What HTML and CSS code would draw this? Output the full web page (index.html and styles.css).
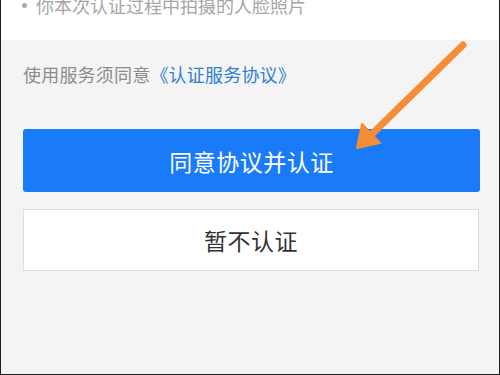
FILE: index.html
```html
<!DOCTYPE html>
<html lang="zh">
<head>
<meta charset="utf-8">
<link rel="stylesheet" href="styles.css">
</head>
<body>
<div class="frame">
  <div class="top">
    <div class="item"><span class="dot"></span><span>你本次认证过程中拍摄的人脸照片</span></div>
  </div>
  <div class="bottom">
    <p class="agree">使用服务须同意<span class="link">《认证服务协议》</span></p>
    <div class="btn primary">同意协议并认证</div>
    <div class="btn secondary">暂不认证</div>
  </div>
  <svg class="arrow" width="500" height="375" viewBox="0 0 500 375">
    <line x1="463" y1="45" x2="372" y2="134" stroke="#f68d36" stroke-width="7" stroke-linecap="round"/>
    <polygon points="362,124 357,148 380,143" fill="#f68d36" stroke="#f68d36" stroke-width="2" stroke-linejoin="round"/>
  </svg>
</div>
</body>
</html>
```
FILE: styles.css
```css
* { box-sizing: border-box; }
html, body { margin: 0; padding: 0; }
body {
  width: 500px;
  height: 375px;
  overflow: hidden;
  font-family: "Noto Sans CJK SC", "Noto Sans", sans-serif;
}
.frame {
  position: relative;
  width: 500px;
  height: 375px;
  border-left: 1px solid #1e1e1e;
  border-right: 1px solid #1e1e1e;
  border-bottom: 1px solid #1e1e1e;
  background: #f4f4f4;
  display: flex;
  flex-direction: column;
}
.top {
  height: 40px;
  background: #ffffff;
  overflow: hidden;
}
.item {
  display: flex;
  align-items: center;
  gap: 9px;
  margin-top: -4px;
  padding-left: 21px;
  font-size: 18px;
  line-height: 18px;
  color: #a6a6a6;
}
.dot {
  width: 5px;
  height: 5px;
  border-radius: 50%;
  background: #a9a9a9;
}
.bottom {
  flex: 1;
  padding: 0 19px 0 22px;
  display: flex;
  flex-direction: column;
}
.agree {
  margin: 25px 0 0 0;
  font-size: 18px;
  line-height: 18px;
  color: #8c8c8c;
  letter-spacing: 0.2px;
}
.link { color: #2f7fd2; }
.btn {
  display: flex;
  align-items: center;
  justify-content: center;
  font-size: 23px;
  letter-spacing: 0.5px;
}
.primary {
  margin-top: 46px;
  height: 63px;
  background: #1a7bf9;
  color: #ffffff;
  border-radius: 3px;
}
.secondary {
  margin-top: 17px;
  height: 62px;
  background: #ffffff;
  color: #333333;
  border: 1px solid #dddddd;
  margin-right: 1px;
}
.arrow {
  position: absolute;
  left: -1px;
  top: 0;
  pointer-events: none;
}
```
